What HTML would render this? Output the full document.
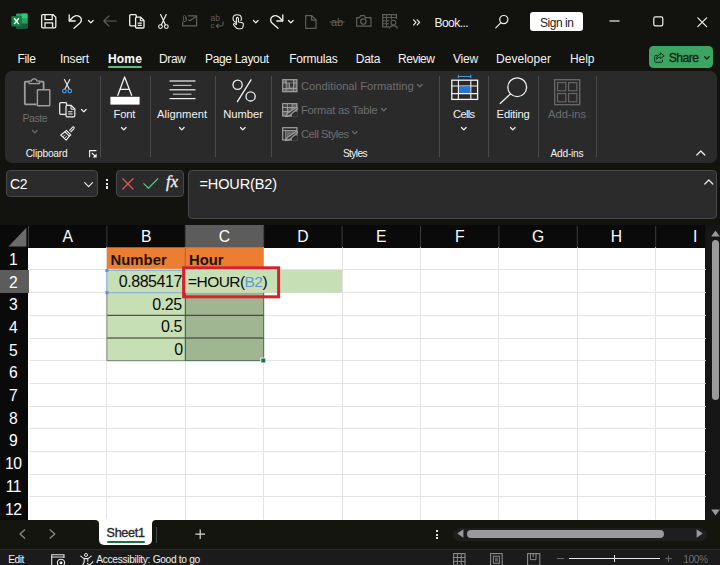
<!DOCTYPE html>
<html>
<head>
<meta charset="utf-8">
<title>Book1 - Excel</title>
<style>
html,body{margin:0;padding:0;}
body{width:720px;height:565px;overflow:hidden;background:#12120e;font-family:"Liberation Sans",sans-serif;position:relative;color:#fff;}
.abs{position:absolute;}
.t{position:absolute;white-space:nowrap;line-height:1;}
svg{position:absolute;overflow:visible;}
/* ribbon */
#ribbon{left:5px;top:70.5px;width:712px;height:92px;background:#2a2a2a;border-radius:7px;}
.tab{font-size:13px;top:52px;color:#fff;}
.sep{position:absolute;width:1px;background:#4a4a4a;top:76px;height:81px;}
.rl{font-size:12px;color:#fff;}
.dis{color:#767676;}
/* formula */
#fbar{left:0;top:166px;width:720px;height:59px;background:#141414;}
#namebox{left:5.5px;top:170px;width:92px;height:27px;background:#2b2b2b;border:1px solid #484848;border-radius:4px;box-sizing:border-box;}
#fxbox{left:116px;top:170px;width:68px;height:27px;background:#2b2b2b;border:1px solid #484848;border-radius:4px;box-sizing:border-box;}
#finput{left:187.5px;top:170px;width:529.5px;height:48.5px;background:#2b2b2b;border:1px solid #484848;border-radius:4px;box-sizing:border-box;}
/* grid */
#grid{left:0;top:225px;width:705px;height:295px;background:#fff;}
#colhdr{left:0;top:225px;width:705px;height:23px;background:#0a0a0a;}
#rowhdr{left:0;top:248px;width:28px;height:272px;background:#0a0a0a;}
.ch{font-size:15px;color:#fff;top:229px;text-align:center;}
.rh{font-size:15px;color:#fff;left:0;width:28px;text-align:center;}
.vl{position:absolute;width:1px;top:248px;height:272px;background:#e1e1e1;}
.hl{position:absolute;height:1px;left:29px;width:676px;background:#e1e1e1;}
.hvl{position:absolute;width:1px;top:226px;height:22px;background:#3c3c3c;}
.cell{font-size:15px;color:#000;}
</style>
</head>
<body>

<!-- ===== TITLE BAR ===== -->
<div id="titlebar">
<svg style="left:11px;top:13px" width="17" height="16" viewBox="0 0 17 16" fill="none">
<rect x="5" y="0.5" width="11.5" height="15" rx="1.2" fill="#21a366"/>
<rect x="10.7" y="0.5" width="5.8" height="5" fill="#33c481"/>
<rect x="5" y="5.5" width="5.7" height="5" fill="#107c41"/>
<rect x="10.7" y="5.5" width="5.8" height="5" fill="#21a366"/>
<rect x="5" y="10.5" width="11.5" height="5" fill="#185c37"/>
<rect x="0.3" y="3" width="10.4" height="10.4" rx="1" fill="#107c41"/>
<path d="M3.2 5.3 L7.8 11.1 M7.8 5.3 L3.2 11.1" stroke="#fff" stroke-width="1.5"/></svg>
<svg style="left:41px;top:14px" width="16" height="15" viewBox="0 0 16 15" fill="none">
<path d="M1.8 0.7 H12.2 L14.8 3.3 V12.5 Q14.8 13.8 13.5 13.8 H1.8 Q0.7 13.8 0.7 12.7 V1.8 Q0.7 0.7 1.8 0.7 Z" stroke="#f0f0f0" stroke-width="1.3"/>
<path d="M4 0.9 V5.6 H11.2 V0.9" stroke="#f0f0f0" stroke-width="1.3"/>
<path d="M4 13.6 V8.8 H11.6 V13.6" stroke="#f0f0f0" stroke-width="1.3"/></svg>
<svg style="left:68px;top:14px" width="15" height="15" viewBox="0 0 15 15" fill="none">
<path d="M1.2 1 V7 H7.2" stroke="#f0f0f0" stroke-width="1.3" stroke-linecap="round" stroke-linejoin="round"/>
<path d="M1.5 6.8 L4.8 3.3 Q8.2 0.2 11.6 2.6 Q15 5.6 12 9 L6 14.2" stroke="#f0f0f0" stroke-width="1.3" stroke-linecap="round" stroke-linejoin="round"/></svg>
<svg style="left:87.7px;top:19.6px" width="5.6" height="3.4" viewBox="0 0 5.6 3.4" fill="none"><path d="M0.5 0.5 L2.8 2.9 L5.1 0.5" stroke="#f0f0f0" stroke-width="1.25" stroke-linecap="round" stroke-linejoin="round"/></svg>
<svg style="left:103px;top:15px" width="14" height="12" viewBox="0 0 14 12" fill="none"><path d="M13.5 6 H0.8 M6 0.8 L0.8 6 L6 11.2" stroke="#5f5f5f" stroke-width="1.2" stroke-linecap="round" stroke-linejoin="round"/></svg>
<svg style="left:128.5px;top:14px" width="16" height="15" viewBox="0 0 16 15" fill="none">
<path d="M6.5 11.8 H1.8 Q0.7 11.8 0.7 10.7 V1.8 Q0.7 0.7 1.8 0.7 H6.2 Q7.3 0.7 7.3 1.8 V3" stroke="#f0f0f0" stroke-width="1.3"/>
<path d="M7.6 3.2 H11.6 L15 6.6 V13 Q15 14 14 14 H7.6 Q6.6 14 6.6 13 V4.2 Q6.6 3.2 7.6 3.2 Z" stroke="#f0f0f0" stroke-width="1.3"/>
<path d="M11.4 3.4 V6.8 H14.8" stroke="#f0f0f0" stroke-width="1.1"/>
<path d="M8.8 9.2 H12.8 M8.8 11.4 H12.8" stroke="#f0f0f0" stroke-width="1.2"/></svg>
<svg style="left:158px;top:13.5px" width="11" height="16" viewBox="0 0 11 16" fill="none">
<path d="M2.6 0.6 L7.4 10.8 M8.2 0.6 L3.4 10.8" stroke="#f0f0f0" stroke-width="1.2" stroke-linecap="round"/>
<circle cx="2.5" cy="12.6" r="1.9" stroke="#f0f0f0" stroke-width="1.1"/>
<circle cx="8.3" cy="12.6" r="1.9" stroke="#f0f0f0" stroke-width="1.1"/></svg>
<svg style="left:182px;top:15px" width="16" height="12" viewBox="0 0 16 12" fill="none">
<path d="M6 0.9 H14.6 V10.8 H0.7 V6.5" stroke="#5f5f5f" stroke-width="1.2"/>
<path d="M14.4 1.2 L8 5.8 L6 4.6" stroke="#5f5f5f" stroke-width="1.1"/>
<path d="M4.4 2.2 V5 Q4.4 6.6 3 6.6 Q1.4 6.6 1.4 5 V1.8 Q1.4 0.5 2.6 0.5 Q3.6 0.5 3.6 1.8 V4.6" stroke="#5f5f5f" stroke-width="0.9"/></svg>
<svg style="left:210px;top:14px" width="15" height="16" viewBox="0 0 15 16" fill="none"><text x="0.6" y="7" font-family="Liberation Sans, sans-serif" font-size="8.5" fill="#5f5f5f">ab</text><text x="0.6" y="14" font-family="Liberation Sans, sans-serif" font-size="8" fill="#5f5f5f">c</text><path d="M13 7.5 V10.2 Q13 12 11 12 H6.5 M8.6 9.8 L6.3 12 L8.6 14.2" stroke="#5f5f5f" stroke-width="1.1"/></svg>
<svg style="left:232px;top:13.5px" width="13" height="16" viewBox="0 0 13 16" fill="none">
<path d="M4.6 8.6 Q1 7.6 1 4.6 Q1 0.8 5.2 0.8 Q9.4 0.8 9.4 4.6 Q9.4 5.6 9 6.4" stroke="#f0f0f0" stroke-width="1.1" stroke-linecap="round"/>
<path d="M4.4 11 V4.6 Q4.4 3.4 5.4 3.4 Q6.4 3.4 6.4 4.6 V8 L10.4 8.8 Q11.6 9.2 11.4 10.6 L10.8 13.4 Q10.4 14.8 9 14.8 H6.4 Q5 14.8 4 13.6 L1.6 10.8 Q1.2 9.8 2.2 9.6 Q3 9.4 4.4 11" stroke="#f0f0f0" stroke-width="1.1" stroke-linejoin="round"/></svg>
<svg style="left:252.7px;top:19.6px" width="5.6" height="3.4" viewBox="0 0 5.6 3.4" fill="none"><path d="M0.5 0.5 L2.8 2.9 L5.1 0.5" stroke="#f0f0f0" stroke-width="1.25" stroke-linecap="round" stroke-linejoin="round"/></svg>
<svg style="left:268.5px;top:14px" width="15" height="15" viewBox="0 0 15 15" fill="none">
<path d="M13.8 1 V7 H7.8" stroke="#f0f0f0" stroke-width="1.3" stroke-linecap="round" stroke-linejoin="round"/>
<path d="M13.5 6.8 L10.2 3.3 Q6.8 0.2 3.4 2.6 Q0 5.6 3 9 L9 14.2" stroke="#f0f0f0" stroke-width="1.3" stroke-linecap="round" stroke-linejoin="round"/></svg>
<svg style="left:288.2px;top:19.6px" width="5.6" height="3.4" viewBox="0 0 5.6 3.4" fill="none"><path d="M0.5 0.5 L2.8 2.9 L5.1 0.5" stroke="#f0f0f0" stroke-width="1.25" stroke-linecap="round" stroke-linejoin="round"/></svg>
<svg style="left:305px;top:14.5px" width="12" height="14" viewBox="0 0 12 14" fill="none"><path d="M0.7 0.7 H6.8 L11 5 V13.3 H0.7 Z M6.6 0.9 V5.2 H10.8" stroke="#5f5f5f" stroke-width="1.2" stroke-linejoin="round"/></svg>
<svg style="left:329px;top:14px" width="16" height="14" viewBox="0 0 16 14" fill="none"><text x="2" y="11.5" font-family="Liberation Sans, sans-serif" font-size="11" fill="#5f5f5f">ab</text><path d="M0.5 8 H15.5" stroke="#5f5f5f" stroke-width="1"/></svg>
<svg style="left:355.5px;top:15px" width="16" height="12" viewBox="0 0 16 12" fill="none">
<path d="M0.7 2.6 H3.6 L4.6 0.7 H8.4 L9.4 2.6 H15 V11.2 H0.7 Z" stroke="#5f5f5f" stroke-width="1.2" stroke-linejoin="round"/>
<circle cx="7.4" cy="6.6" r="2.7" stroke="#5f5f5f" stroke-width="1.2"/></svg>
<svg style="left:382px;top:14px" width="16" height="15" viewBox="0 0 16 15" fill="none">
<path d="M7 12.8 H0.7 V0.7 H14.4 V5" stroke="#5f5f5f" stroke-width="1.2"/>
<path d="M0.7 3.6 H14.4 M4.6 0.7 V12.8 M9.4 0.7 V5.6 M0.7 6.8 H7.6 M0.7 9.8 H7" stroke="#5f5f5f" stroke-width="1"/>
<circle cx="11.4" cy="8.6" r="2.4" stroke="#5f5f5f" stroke-width="1.1"/>
<path d="M7.4 14.6 Q7.8 11.6 11.4 11.6 Q15 11.6 15.4 14.6" stroke="#5f5f5f" stroke-width="1.1"/></svg>
<svg style="left:412.5px;top:18.5px" width="8" height="7" viewBox="0 0 8 7" fill="none"><path d="M0.6 0.8 L3 3.3 L0.6 5.8 M4.2 0.8 L6.6 3.3 L4.2 5.8" stroke="#f0f0f0" stroke-width="1.2" stroke-linecap="round" stroke-linejoin="round"/></svg>
<div class="t" style="left:434.5px;top:16.5px;font-size:12px;color:#f2f2f2;letter-spacing:-0.55px;">Book...</div>
<svg style="left:495px;top:14px" width="15" height="15" viewBox="0 0 15 15" fill="none"><circle cx="8.8" cy="5.6" r="4.1" stroke="#f0f0f0" stroke-width="1.2"/><path d="M5.9 8.6 L0.8 13.8" stroke="#f0f0f0" stroke-width="1.2" stroke-linecap="round"/></svg>
<div class="abs" style="left:530px;top:12px;width:53px;height:19px;background:#fff;border-radius:3px"></div>
<div class="t" style="left:540.0px;top:16.5px;font-size:12px;color:#222;letter-spacing:-0.46px;">Sign in</div>
<svg style="left:608.5px;top:19.7px" width="12" height="2" viewBox="0 0 12 2" fill="none"><path d="M0.5 1 H10.5" stroke="#f0f0f0" stroke-width="1.2"/></svg>
<svg style="left:652.7px;top:16px" width="11" height="11" viewBox="0 0 11 11" fill="none"><rect x="0.8" y="0.8" width="9" height="9" rx="1.6" stroke="#f0f0f0" stroke-width="1.2"/></svg>
<svg style="left:697.3px;top:16.8px" width="11" height="11" viewBox="0 0 11 11" fill="none"><path d="M0.8 0.8 L9.6 9.6 M9.6 0.8 L0.8 9.6" stroke="#f0f0f0" stroke-width="1.2" stroke-linecap="round"/></svg>
</div>

<!-- ===== TABS ===== -->
<div id="tabs">
<div class="t" style="left:17.5px;top:53.0px;font-size:12px;color:#f4f4f4;letter-spacing:-0.34px;">File</div>
<div class="t" style="left:60.0px;top:53.0px;font-size:12px;color:#f4f4f4;letter-spacing:-0.21px;">Insert</div>
<div class="t" style="left:159.0px;top:53.0px;font-size:12px;color:#f4f4f4;letter-spacing:-0.38px;">Draw</div>
<div class="t" style="left:205.0px;top:53.0px;font-size:12px;color:#f4f4f4;letter-spacing:-0.33px;">Page Layout</div>
<div class="t" style="left:289.2px;top:53.0px;font-size:12px;color:#f4f4f4;letter-spacing:-0.22px;">Formulas</div>
<div class="t" style="left:355.8px;top:53.0px;font-size:12px;color:#f4f4f4;letter-spacing:-0.28px;">Data</div>
<div class="t" style="left:398.0px;top:53.0px;font-size:12px;color:#f4f4f4;letter-spacing:-0.48px;">Review</div>
<div class="t" style="left:453.0px;top:53.0px;font-size:12px;color:#f4f4f4;letter-spacing:-0.20px;">View</div>
<div class="t" style="left:496.0px;top:53.0px;font-size:12px;color:#f4f4f4;letter-spacing:0.03px;">Developer</div>
<div class="t" style="left:570.0px;top:53.0px;font-size:12px;color:#f4f4f4;letter-spacing:-0.05px;">Help</div>
<div class="t" style="left:108.0px;top:53.0px;font-size:12px;color:#fff;letter-spacing:0.16px;font-weight:bold;">Home</div>
<div class="abs" style="left:108px;top:66px;width:34px;height:2px;background:#5fb87c;border-radius:1px"></div>
<div class="abs" style="left:649px;top:46px;width:64px;height:22px;background:#3ca561;border-radius:4.5px"></div>
<svg style="left:653.5px;top:51.5px" width="11" height="11" viewBox="0 0 11 11" fill="none"><path d="M3.6 3.4 H1.6 Q0.7 3.4 0.7 4.3 V9.4 Q0.7 10.3 1.6 10.3 H7.6 Q8.5 10.3 8.5 9.4 V7.6" stroke="#123020" stroke-width="1"/><path d="M6.4 0.8 L10.2 3.8 L6.4 6.6 V5 Q3.6 5 2.6 7.4 Q2.8 2.8 6.4 2.6 Z" stroke="#123020" stroke-width="1" stroke-linejoin="round"/></svg>
<div class="t" style="left:668.8px;top:52.0px;font-size:12.2px;color:#0c2616;letter-spacing:-0.59px;-webkit-text-stroke:0.3px #0c2616;">Share</div>
<svg style="left:703.9px;top:55.6px" width="6" height="4" viewBox="0 0 6 4" fill="none"><path d="M0.7 0.7 L2.9 2.9 L5.1 0.7" stroke="#0f2a1b" stroke-width="1.4" stroke-linecap="round" stroke-linejoin="round"/></svg>
</div>

<!-- ===== RIBBON ===== -->
<div class="abs" id="ribbon"></div>
<div id="ribboncontent">
<div class="sep" style="left:100px"></div>
<div class="sep" style="left:150px"></div>
<div class="sep" style="left:215px"></div>
<div class="sep" style="left:271px"></div>
<div class="sep" style="left:439px"></div>
<div class="sep" style="left:488px"></div>
<div class="sep" style="left:538px"></div>
<div class="sep" style="left:596px"></div>
<svg style="left:24px;top:78px" width="27" height="29" viewBox="0 0 27 29" fill="none">
<path d="M5 3.6 H1.6 Q0.8 3.6 0.8 4.4 V25.6 Q0.8 26.4 1.6 26.4 H12.6" stroke="#9e9e9e" stroke-width="1.8"/>
<path d="M15.4 3.6 H18.8 Q19.6 3.6 19.6 4.4 V11" stroke="#9e9e9e" stroke-width="1.8"/>
<path d="M5 5.6 V3.2 H7.4 Q7.6 0.8 10.2 0.8 Q12.8 0.8 13 3.2 H15.4 V5.6 Z" stroke="#9e9e9e" stroke-width="1.3" stroke-linejoin="round"/>
<rect x="13.4" y="11.8" width="12.4" height="16" rx="0.6" fill="#2a2a2a" stroke="#9e9e9e" stroke-width="1.4"/></svg>
<div class="t" style="left:22.5px;top:112.7px;font-size:10.6px;color:#6e6e6e;letter-spacing:-0.46px;">Paste</div>
<svg style="left:31.6px;top:130px" width="5.6" height="3.4" viewBox="0 0 5.6 3.4" fill="none"><path d="M0.5 0.5 L2.8 2.9 L5.1 0.5" stroke="#6e6e6e" stroke-width="1.25" stroke-linecap="round" stroke-linejoin="round"/></svg>
<svg style="left:61.5px;top:78.5px" width="11" height="15" viewBox="0 0 11 15" fill="none">
<path d="M2.4 0.6 L7.2 10 M7.8 0.6 L3 10" stroke="#f2f2f2" stroke-width="1.1" stroke-linecap="round"/>
<circle cx="2.4" cy="12" r="1.8" stroke="#3f9be6" stroke-width="1.2"/>
<circle cx="7.8" cy="12" r="1.8" stroke="#3f9be6" stroke-width="1.2"/></svg>
<svg style="left:58.5px;top:101.5px" width="17" height="16" viewBox="0 0 17 16" fill="none">
<path d="M6.8 12.4 H1.8 Q0.7 12.4 0.7 11.3 V1.8 Q0.7 0.7 1.8 0.7 H6.6 Q7.7 0.7 7.7 1.8 V3.2" stroke="#f2f2f2" stroke-width="1.2"/>
<path d="M8 3.4 H12.2 L15.8 7 V13.8 Q15.8 14.8 14.8 14.8 H8 Q7 14.8 7 13.8 V4.4 Q7 3.4 8 3.4 Z" stroke="#f2f2f2" stroke-width="1.2"/>
<path d="M12 3.6 V7.2 H15.6" stroke="#f2f2f2" stroke-width="1"/>
<path d="M9.2 9.8 H13.6 M9.2 12 H13.6" stroke="#f2f2f2" stroke-width="1.1"/></svg>
<svg style="left:81.0px;top:108.6px" width="5.6" height="3.4" viewBox="0 0 5.6 3.4" fill="none"><path d="M0.5 0.5 L2.8 2.9 L5.1 0.5" stroke="#f2f2f2" stroke-width="1.25" stroke-linecap="round" stroke-linejoin="round"/></svg>
<svg style="left:60px;top:126px" width="15" height="15" viewBox="0 0 15 15" fill="none">
<path d="M9.4 4.6 L12.6 1.2 Q13.4 0.5 14 1.2 Q14.6 2 13.8 2.8 L10.6 6" stroke="#f2f2f2" stroke-width="1.1" stroke-linejoin="round"/>
<path d="M6.4 4.4 L10.8 8.8 L9.4 10.2 L5 5.8 Z" stroke="#f2f2f2" stroke-width="1.1" stroke-linejoin="round"/>
<path d="M5 5.8 L0.8 9 L6.2 14.2 L9.4 10.2" stroke="#f2f2f2" stroke-width="1.1" stroke-linejoin="round"/>
<path d="M3 10.8 L5 8.6 M4.6 12.4 L6.8 10" stroke="#f2f2f2" stroke-width="0.8"/></svg>
<div class="t" style="left:25.7px;top:149.1px;font-size:10.2px;color:#f2f2f2;letter-spacing:-0.20px;">Clipboard</div>
<svg style="left:88.6px;top:149.6px" width="8" height="8" viewBox="0 0 8 8" fill="none"><path d="M0.6 7.2 V0.6 H7.4" stroke="#f2f2f2" stroke-width="1.1"/><path d="M2.8 2.8 L6 6" stroke="#f2f2f2" stroke-width="1.1"/><path d="M7.6 3.6 V7.6 H3.6 Z" fill="#f2f2f2"/></svg>
<svg style="left:109.5px;top:76px" width="30" height="29" viewBox="0 0 30 29" fill="none">
<path d="M7.6 19.8 L14.6 1 L21.8 19.8 M10.2 13.4 H19.2" stroke="#f2f2f2" stroke-width="1.3" stroke-linejoin="round"/>
<rect x="0.4" y="20.8" width="29.2" height="7.8" fill="#ffffff"/></svg>
<div class="t" style="left:113.5px;top:109.4px;font-size:11.2px;color:#f2f2f2;letter-spacing:-0.15px;">Font</div>
<svg style="left:121.4px;top:127px" width="5.6" height="3.4" viewBox="0 0 5.6 3.4" fill="none"><path d="M0.5 0.5 L2.8 2.9 L5.1 0.5" stroke="#f2f2f2" stroke-width="1.25" stroke-linecap="round" stroke-linejoin="round"/></svg>
<svg style="left:168.5px;top:79.5px" width="27" height="20" viewBox="0 0 27 20" fill="none"><path d="M0.5 1.0 H26.5" stroke="#f2f2f2" stroke-width="1.2"/><path d="M4 5.4 H22.5" stroke="#bdbdbd" stroke-width="1.2"/><path d="M0.5 9.8 H26.5" stroke="#f2f2f2" stroke-width="1.2"/><path d="M4 14.200000000000001 H22.5" stroke="#bdbdbd" stroke-width="1.2"/><path d="M0.5 18.6 H26.5" stroke="#f2f2f2" stroke-width="1.2"/></svg>
<div class="t" style="left:157.0px;top:109.4px;font-size:11.2px;color:#f2f2f2;letter-spacing:0.03px;">Alignment</div>
<svg style="left:178.5px;top:127px" width="5.6" height="3.4" viewBox="0 0 5.6 3.4" fill="none"><path d="M0.5 0.5 L2.8 2.9 L5.1 0.5" stroke="#f2f2f2" stroke-width="1.25" stroke-linecap="round" stroke-linejoin="round"/></svg>
<svg style="left:231.5px;top:78.5px" width="25" height="24" viewBox="0 0 25 24" fill="none">
<circle cx="5.6" cy="5.8" r="4.6" stroke="#f2f2f2" stroke-width="1.3"/>
<circle cx="18.6" cy="17.4" r="4.6" stroke="#f2f2f2" stroke-width="1.3"/>
<path d="M19 0.8 L5.4 22.6" stroke="#f2f2f2" stroke-width="1.3" stroke-linecap="round"/></svg>
<div class="t" style="left:223.3px;top:109.4px;font-size:11.2px;color:#f2f2f2;letter-spacing:-0.02px;">Number</div>
<svg style="left:239.8px;top:127px" width="5.6" height="3.4" viewBox="0 0 5.6 3.4" fill="none"><path d="M0.5 0.5 L2.8 2.9 L5.1 0.5" stroke="#f2f2f2" stroke-width="1.25" stroke-linecap="round" stroke-linejoin="round"/></svg>
<svg style="left:282px;top:79px" width="16" height="14" viewBox="0 0 16 14" fill="none">
<rect x="0.7" y="0.7" width="14.2" height="12" fill="#5e5e5e" stroke="#a2a2a2" stroke-width="1.2"/>
<path d="M0.7 3.9 H14.9 M0.7 9.6 H14.9 M4 0.7 V12.7 M11.4 0.7 V12.7" stroke="#a2a2a2" stroke-width="1"/>
<rect x="5" y="1.6" width="6" height="2" fill="#3a3a3a"/>
<rect x="7.6" y="4.4" width="3.4" height="3" fill="#2e2e2e"/>
<rect x="1.4" y="4.6" width="2.2" height="4.6" fill="#3a3a3a"/>
<path d="M7.4 3.9 V9.6" stroke="#a2a2a2" stroke-width="0.9"/></svg>
<svg style="left:282px;top:103px" width="16" height="14" viewBox="0 0 16 14" fill="none">
<rect x="0.7" y="0.7" width="14.2" height="12.2" fill="#5e5e5e" stroke="#a2a2a2" stroke-width="1.2"/>
<path d="M0.7 4.4 H14.9 M0.7 8.6 H14.9 M5.2 0.7 V12.9 M10 0.7 V12.9" stroke="#a2a2a2" stroke-width="1"/>
<rect x="1.4" y="1.4" width="3.2" height="2.4" fill="#3a3a3a"/><rect x="5.8" y="1.4" width="3.6" height="2.4" fill="#3a3a3a"/><rect x="1.4" y="5" width="3.2" height="3" fill="#3a3a3a"/>
<rect x="10" y="8.6" width="5.6" height="5" fill="#292929"/>
<path d="M14.6 4.2 L15.6 5.4 L7.6 12.6 L3.6 13.6 L5.4 10.4 Z" fill="#3c3c3c" stroke="#a2a2a2" stroke-width="1.1" stroke-linejoin="round"/><path d="M3.2 13.2 H6.4" stroke="#a2a2a2" stroke-width="1"/></svg>
<svg style="left:282px;top:127px" width="16" height="14" viewBox="0 0 16 14" fill="none">
<rect x="0.7" y="0.7" width="14.2" height="12.2" fill="#2e2e2e" stroke="#a2a2a2" stroke-width="1.2"/>
<path d="M0.7 3.6 H14.9 M3.8 3.6 V12.9" stroke="#a2a2a2" stroke-width="1"/>
<rect x="4.4" y="4.2" width="9.8" height="8" fill="#6a6a6a"/>
<rect x="10" y="8.6" width="5.6" height="5" fill="#292929"/>
<path d="M14.6 4.2 L15.6 5.4 L7.6 12.6 L3.6 13.6 L5.4 10.4 Z" fill="#3c3c3c" stroke="#a2a2a2" stroke-width="1.1" stroke-linejoin="round"/><path d="M3.2 13.2 H6.4" stroke="#a2a2a2" stroke-width="1"/></svg>
<div class="t" style="left:301.0px;top:81.0px;font-size:11.2px;color:#6e6e6e;letter-spacing:0.01px;">Conditional Formatting</div>
<svg style="left:417.2px;top:83.6px" width="5.6" height="3.4" viewBox="0 0 5.6 3.4" fill="none"><path d="M0.5 0.5 L2.8 2.9 L5.1 0.5" stroke="#6e6e6e" stroke-width="1.25" stroke-linecap="round" stroke-linejoin="round"/></svg>
<div class="t" style="left:301.0px;top:104.9px;font-size:11.2px;color:#6e6e6e;letter-spacing:-0.23px;">Format as Table</div>
<svg style="left:381.0px;top:107.5px" width="5.6" height="3.4" viewBox="0 0 5.6 3.4" fill="none"><path d="M0.5 0.5 L2.8 2.9 L5.1 0.5" stroke="#6e6e6e" stroke-width="1.25" stroke-linecap="round" stroke-linejoin="round"/></svg>
<div class="t" style="left:301.0px;top:128.8px;font-size:11.2px;color:#6e6e6e;letter-spacing:-0.47px;">Cell Styles</div>
<svg style="left:352.2px;top:131.4px" width="5.6" height="3.4" viewBox="0 0 5.6 3.4" fill="none"><path d="M0.5 0.5 L2.8 2.9 L5.1 0.5" stroke="#6e6e6e" stroke-width="1.25" stroke-linecap="round" stroke-linejoin="round"/></svg>
<div class="t" style="left:342.9px;top:149.1px;font-size:10.2px;color:#f2f2f2;letter-spacing:-0.62px;">Styles</div>
<svg style="left:450.5px;top:74px" width="28" height="27" viewBox="0 0 28 27" fill="none">
<path d="M7.4 2.5 H19.8 M7.4 0.8 V4.2 M19.8 0.8 V4.2" stroke="#3f9be6" stroke-width="1.1"/>
<rect x="0.8" y="6.2" width="25.8" height="19.2" stroke="#f2f2f2" stroke-width="1.3"/>
<path d="M7.4 6.2 V25.4 M19.8 6.2 V25.4 M0.8 12 H26.6 M0.8 19.6 H26.6" stroke="#f2f2f2" stroke-width="1.1"/>
<rect x="8" y="12.6" width="11.2" height="6.4" fill="#1f78d8"/></svg>
<div class="t" style="left:453.0px;top:109.4px;font-size:11.2px;color:#f2f2f2;letter-spacing:-0.70px;">Cells</div>
<svg style="left:460.8px;top:127px" width="5.6" height="3.4" viewBox="0 0 5.6 3.4" fill="none"><path d="M0.5 0.5 L2.8 2.9 L5.1 0.5" stroke="#f2f2f2" stroke-width="1.25" stroke-linecap="round" stroke-linejoin="round"/></svg>
<svg style="left:499px;top:76px" width="30" height="29" viewBox="0 0 30 29" fill="none"><circle cx="18.2" cy="11.2" r="9.4" stroke="#f2f2f2" stroke-width="1.3"/><path d="M11.4 18 L1.2 27.4" stroke="#f2f2f2" stroke-width="1.3" stroke-linecap="round"/></svg>
<div class="t" style="left:496.6px;top:109.4px;font-size:11.2px;color:#f2f2f2;letter-spacing:-0.17px;">Editing</div>
<svg style="left:510.4px;top:127px" width="5.6" height="3.4" viewBox="0 0 5.6 3.4" fill="none"><path d="M0.5 0.5 L2.8 2.9 L5.1 0.5" stroke="#f2f2f2" stroke-width="1.25" stroke-linecap="round" stroke-linejoin="round"/></svg>
<svg style="left:554px;top:78.5px" width="27" height="27" viewBox="0 0 27 27" fill="none">
<rect x="0.7" y="0.7" width="25" height="25" stroke="#6a6a6a" stroke-width="1.3"/>
<rect x="3.6" y="3.6" width="8.2" height="8.2" stroke="#6a6a6a" stroke-width="1.1"/>
<rect x="14.6" y="3.6" width="8.2" height="8.2" stroke="#6a6a6a" stroke-width="1.1"/>
<rect x="3.6" y="14.6" width="8.2" height="8.2" stroke="#6a6a6a" stroke-width="1.1"/>
<rect x="14.6" y="14.6" width="8.2" height="8.2" stroke="#6a6a6a" stroke-width="1.1"/></svg>
<div class="t" style="left:548.0px;top:109.4px;font-size:11.2px;color:#6e6e6e;letter-spacing:0.01px;">Add-ins</div>
<div class="t" style="left:550.5px;top:149.1px;font-size:10.2px;color:#f2f2f2;letter-spacing:-0.25px;">Add-ins</div>
<svg style="left:696.4px;top:150.3px" width="10" height="6" viewBox="0 0 10 6" fill="none"><path d="M0.8 5 L4.8 1 L8.8 5" stroke="#f2f2f2" stroke-width="1.2" stroke-linecap="round" stroke-linejoin="round"/></svg>
</div>

<!-- ===== FORMULA BAR ===== -->
<div class="abs" id="namebox"></div>
<div class="abs" id="fxbox"></div>
<div class="abs" id="finput"></div>
<div id="fcontent">
<div class="t" style="left:10.0px;top:177.0px;font-size:14px;color:#fff;letter-spacing:-0.45px;">C2</div>
<svg style="left:83.5px;top:181.5px" width="10" height="6" viewBox="0 0 10 6" fill="none"><path d="M0.7 0.7 L4.6 4.7 L8.5 0.7" stroke="#e8e8e8" stroke-width="1.2" stroke-linecap="round" stroke-linejoin="round"/></svg>
<div class="abs" style="left:106.3px;top:179.2px;width:2.2px;height:2.2px;background:#e6e6e6"></div>
<div class="abs" style="left:106.3px;top:182.8px;width:2.2px;height:2.2px;background:#e6e6e6"></div>
<div class="abs" style="left:106.3px;top:186.4px;width:2.2px;height:2.2px;background:#e6e6e6"></div>
<svg style="left:122px;top:177.5px" width="12" height="12" viewBox="0 0 12 12" fill="none"><path d="M0.8 0.8 L11 11 M11 0.8 L0.8 11" stroke="#d9575c" stroke-width="1.3" stroke-linecap="round"/></svg>
<svg style="left:142.5px;top:177.5px" width="16" height="11" viewBox="0 0 16 11" fill="none"><path d="M0.8 5.6 L5.4 10.2 L14.8 0.8" stroke="#52c083" stroke-width="1.3" stroke-linecap="round" stroke-linejoin="round"/></svg>
<div class="t" style="left:166px;top:174.3px;font-family:'Liberation Serif',serif;font-style:italic;font-size:16.5px;-webkit-text-stroke:0.35px #f0f0f0;color:#f0f0f0;letter-spacing:0.2px">fx</div>
<div class="t" style="left:199.5px;top:177.4px;font-size:14.5px;color:#fff;letter-spacing:-0.12px;">=HOUR(B2)</div>
<svg style="left:703.6px;top:178.5px" width="10" height="6" viewBox="0 0 10 6" fill="none"><path d="M0.8 5 L4.8 1 L8.8 5" stroke="#e8e8e8" stroke-width="1.2" stroke-linecap="round" stroke-linejoin="round"/></svg>
</div>

<!-- ===== GRID ===== -->
<div class="abs" id="grid"></div>
<div class="abs" id="colhdr"></div>
<div class="abs" id="rowhdr"></div>
<div id="gridcontent">
<div class="abs" style="left:185px;top:225px;width:79px;height:22.5px;background:#5c5c5c;"></div>
<div class="abs" style="left:0px;top:270px;width:28.5px;height:23px;background:#5c5c5c;"></div>
<svg style="left:0;top:0" width="720" height="565" viewBox="0 0 720 565" fill="none"><path d="M28.50 226V247.3M106.90 226V247.3M185.30 226V247.3M263.70 226V247.3M342.10 226V247.3M420.50 226V247.3M498.90 226V247.3M577.30 226V247.3M655.70 226V247.3" stroke="#3c3c3c" stroke-width="1"/><path d="M26.4 227.8 V246.4 H8.4 Z" fill="#6b6b6b"/><path d="M106.5 247.3V519.6M185.5 247.3V519.6M263.5 247.3V519.6M342.5 247.3V519.6M420.5 247.3V519.6M498.5 247.3V519.6M577.5 247.3V519.6M655.5 247.3V519.6M29 269.5H705.8M29 292.5H705.8M29 315.5H705.8M29 338.5H705.8M29 360.5H705.8M29 383.5H705.8M29 406.5H705.8M29 428.5H705.8M29 451.5H705.8M29 474.5H705.8M29 496.5H705.8" stroke="#e3e3e3" stroke-width="1"/><rect x="106.9" y="247.3" width="156.8" height="21.6" fill="#ed7d31"/><rect x="106.9" y="270" width="235.2" height="22.7" fill="#c6dfb4"/><rect x="106.9" y="292.7" width="78.4" height="68" fill="#c6dfb4"/><rect x="185.3" y="292.7" width="78.4" height="68" fill="#a0b592"/><path d="M185.3 248V269" stroke="#a45a28" stroke-width="0.8"/><path d="M106.9 315.3H263.7M106.9 338H263.7" stroke="#2a3326" stroke-width="1"/><path d="M106.9 360.7H185.3" stroke="#6f7f68" stroke-width="1"/><path d="M106.9 292.7V360.7" stroke="#7f8f77" stroke-width="1"/><path d="M185.3 292.7V360.7" stroke="#2f5a3c" stroke-width="1"/><path d="M263.7 292.7V360.7M185.3 360.7H263.7" stroke="#3d6e4f" stroke-width="1"/><rect x="260.4" y="357.6" width="5.8" height="5.8" fill="#fff"/><rect x="261.3" y="358.5" width="4" height="4" fill="#1f6e43"/><rect x="106.9" y="270.3" width="78.2" height="22.4" stroke="#7aa8e0" stroke-width="1"/><rect x="105.4" y="269" width="3" height="3" fill="#5b90da"/><rect x="105.4" y="291.2" width="3" height="3" fill="#5b90da"/></svg>
<div class="t" style="left:62.5px;top:228.7px;font-size:15.7px;color:#fff;">A</div>
<div class="t" style="left:140.9px;top:228.7px;font-size:15.7px;color:#fff;">B</div>
<div class="t" style="left:218.8px;top:228.7px;font-size:15.7px;color:#fff;">C</div>
<div class="t" style="left:297.2px;top:228.7px;font-size:15.7px;color:#fff;">D</div>
<div class="t" style="left:376.1px;top:228.7px;font-size:15.7px;color:#fff;">E</div>
<div class="t" style="left:454.9px;top:228.7px;font-size:15.7px;color:#fff;">F</div>
<div class="t" style="left:532.0px;top:228.7px;font-size:15.7px;color:#fff;">G</div>
<div class="t" style="left:610.8px;top:228.7px;font-size:15.7px;color:#fff;">H</div>
<div class="t" style="left:693.1px;top:228.7px;font-size:15.7px;color:#fff;">I</div>
<div class="t" style="left:9.1px;top:252.0px;font-size:15.7px;color:#fff;letter-spacing:-0.60px;">1</div>
<div class="t" style="left:9.1px;top:274.7px;font-size:15.7px;color:#fff;letter-spacing:-0.60px;">2</div>
<div class="t" style="left:9.1px;top:297.4px;font-size:15.7px;color:#fff;letter-spacing:-0.60px;">3</div>
<div class="t" style="left:9.1px;top:320.0px;font-size:15.7px;color:#fff;letter-spacing:-0.60px;">4</div>
<div class="t" style="left:9.1px;top:342.7px;font-size:15.7px;color:#fff;letter-spacing:-0.60px;">5</div>
<div class="t" style="left:9.1px;top:365.4px;font-size:15.7px;color:#fff;letter-spacing:-0.60px;">6</div>
<div class="t" style="left:9.1px;top:388.1px;font-size:15.7px;color:#fff;letter-spacing:-0.60px;">7</div>
<div class="t" style="left:9.1px;top:410.8px;font-size:15.7px;color:#fff;letter-spacing:-0.60px;">8</div>
<div class="t" style="left:9.1px;top:433.4px;font-size:15.7px;color:#fff;letter-spacing:-0.60px;">9</div>
<div class="t" style="left:5.1px;top:456.1px;font-size:15.7px;color:#fff;letter-spacing:-0.60px;">10</div>
<div class="t" style="left:5.7px;top:478.8px;font-size:15.7px;color:#fff;letter-spacing:-0.60px;">11</div>
<div class="t" style="left:5.1px;top:501.5px;font-size:15.7px;color:#fff;letter-spacing:-0.60px;">12</div>
<div class="t" style="left:110.4px;top:252.9px;font-size:14.8px;color:#1c1208;letter-spacing:0.11px;font-weight:bold;">Number</div>
<div class="t" style="left:189.0px;top:252.9px;font-size:14.8px;color:#1c1208;letter-spacing:0.02px;font-weight:bold;">Hour</div>
<div class="t" style="left:118.7px;top:274.0px;font-size:16px;color:#0a0a0a;letter-spacing:-0.43px;">0.885417</div>
<div class="t" style="left:152.3px;top:296.7px;font-size:16px;color:#0a0a0a;letter-spacing:-0.39px;">0.25</div>
<div class="t" style="left:161.0px;top:319.4px;font-size:16px;color:#0a0a0a;letter-spacing:-0.48px;">0.5</div>
<div class="t" style="left:174.2px;top:342.1px;font-size:16px;color:#0a0a0a;letter-spacing:-1.31px;">0</div>
<div class="t" style="left:188.0px;top:274.4px;font-size:15.5px;color:#0a0a0a;letter-spacing:-0.55px;">=HOUR(<span style="color:#5b9bd5">B2</span>)</div>
<svg style="left:0;top:0" width="720" height="565" viewBox="0 0 720 565" fill="none"><rect x="183.6" y="267.8" width="95" height="29" stroke="#d6222c" stroke-width="3"/></svg>
</div>

<!-- ===== SHEET TABS ===== -->
<div id="sheettabs">
<div class="abs" style="left:0px;top:519.6px;width:720px;height:29.4px;background:#14150f;"></div>
<div class="abs" style="left:706px;top:225px;width:14px;height:295px;background:#161616;"></div>
<svg style="left:710.5px;top:229.5px" width="9" height="7" viewBox="0 0 9 7" fill="none"><path d="M4.5 0.4 L8.8 6.4 H0.2 Z" fill="#9a9a9a"/></svg>
<div class="abs" style="left:711.5px;top:240px;width:7.5px;height:160px;background:#9a9a9a;border-radius:4px"></div>
<svg style="left:710.5px;top:508.5px" width="9" height="7" viewBox="0 0 9 7" fill="none"><path d="M4.5 6.6 L8.8 0.6 H0.2 Z" fill="#9a9a9a"/></svg>
<div class="abs" style="left:99.3px;top:519px;width:53px;height:26.4px;background:#ffffff;border-radius:0 0 5px 5px"></div>
<svg style="left:95.3px;top:519.6px" width="4" height="4" viewBox="0 0 4 4" fill="none"><path d="M0 0 H4 V4 Q4 0 0 0 Z" fill="#fff"/></svg>
<svg style="left:152.3px;top:519.6px" width="4" height="4" viewBox="0 0 4 4" fill="none"><path d="M4 0 H0 V4 Q0 0 4 0 Z" fill="#fff"/></svg>
<div class="t" style="left:106.6px;top:526.7px;font-size:12.6px;color:#262626;letter-spacing:-0.32px;-webkit-text-stroke:0.35px #262626;">Sheet1</div>
<div class="abs" style="left:106.6px;top:540.6px;width:38px;height:2px;background:#1e6f44;border-radius:1px"></div>
<div class="abs" style="left:155.5px;top:526.5px;width:1px;height:16px;background:#4a4a4a;"></div>
<svg style="left:18.5px;top:529px" width="7" height="10" viewBox="0 0 7 10" fill="none"><path d="M5.8 0.8 L1 5 L5.8 9.2" stroke="#8e8e8e" stroke-width="1.2" stroke-linecap="round" stroke-linejoin="round"/></svg>
<svg style="left:48.5px;top:529px" width="7" height="10" viewBox="0 0 7 10" fill="none"><path d="M1 0.8 L5.8 5 L1 9.2" stroke="#8e8e8e" stroke-width="1.2" stroke-linecap="round" stroke-linejoin="round"/></svg>
<svg style="left:195px;top:528.5px" width="11" height="11" viewBox="0 0 11 11" fill="none"><path d="M5.2 0.4 V10 M0.4 5.2 H10" stroke="#d6d6d6" stroke-width="1.2"/></svg>
<div class="abs" style="left:452.5px;top:527.5px;width:254px;height:13.4px;background:#1e1e1e;border-radius:7px"></div>
<div class="abs" style="left:467px;top:530.2px;width:196.7px;height:7.4px;background:#9a9a9a;border-radius:4px"></div>
<svg style="left:456.5px;top:529.3px" width="7" height="9" viewBox="0 0 7 9" fill="none"><path d="M0.3 4.5 L6.4 0.2 V8.8 Z" fill="#9a9a9a"/></svg>
<svg style="left:696px;top:529.3px" width="7" height="9" viewBox="0 0 7 9" fill="none"><path d="M6.7 4.5 L0.6 0.2 V8.8 Z" fill="#9a9a9a"/></svg>
<div class="abs" style="left:435.8px;top:530.2px;width:2.2px;height:2.2px;background:#e0e0e0;"></div>
<div class="abs" style="left:435.8px;top:533.5px;width:2.2px;height:2.2px;background:#e0e0e0;"></div>
<div class="abs" style="left:435.8px;top:536.8px;width:2.2px;height:2.2px;background:#e0e0e0;"></div>
</div>

<!-- ===== STATUS BAR ===== -->
<div id="status">
<div class="abs" style="left:0px;top:549px;width:720px;height:16px;background:#1b1b1b;"></div>
<div class="abs" style="left:0px;top:548.6px;width:720px;height:1px;background:#2e2e2e;"></div>
<div class="t" style="left:8.3px;top:555.1px;font-size:10.2px;color:#f0f0f0;letter-spacing:-0.49px;">Edit</div>
<svg style="left:50.5px;top:553.5px" width="15" height="12" viewBox="0 0 15 12" fill="none"><path d="M0.7 11.5 V0.7 H13 V4" stroke="#e6e6e6" stroke-width="1.1"/><path d="M0.7 3 H13" stroke="#e6e6e6" stroke-width="1"/><circle cx="10" cy="8.8" r="3.6" stroke="#e6e6e6" stroke-width="1.1"/><circle cx="10" cy="8.8" r="1.5" fill="#e6e6e6"/></svg>
<svg style="left:79.5px;top:552.5px" width="14" height="13" viewBox="0 0 14 13" fill="none"><circle cx="6" cy="2" r="1.5" stroke="#e6e6e6" stroke-width="1"/><path d="M0.8 3.2 Q3.4 5.4 4.2 5.6 V9 L2.4 12.6 M11.2 3.2 Q8.6 5.4 7.8 5.6 V8.2 M4.2 5.6 H7.8" stroke="#e6e6e6" stroke-width="1.1" stroke-linecap="round" stroke-linejoin="round"/><path d="M7.4 10.4 L9.4 12.4 L13 8.6" stroke="#e6e6e6" stroke-width="1.1" stroke-linecap="round" stroke-linejoin="round"/></svg>
<div class="t" style="left:96.3px;top:555.1px;font-size:10.2px;color:#f0f0f0;letter-spacing:-0.32px;">Accessibility: Good to go</div>
<svg style="left:453px;top:553px" width="13" height="13" viewBox="0 0 13 13" fill="none"><rect x="0.6" y="0.6" width="11.4" height="11.8" stroke="#8a8a8a" stroke-width="1.1"/><path d="M4.4 0.6 V12.4 M8.2 0.6 V12.4 M0.6 4.5 H12 M0.6 8.4 H12" stroke="#8a8a8a" stroke-width="1"/></svg>
<svg style="left:490px;top:553px" width="13" height="13" viewBox="0 0 13 13" fill="none"><rect x="0.6" y="0.6" width="11.6" height="11.8" stroke="#8a8a8a" stroke-width="1.1"/><rect x="3.4" y="3.2" width="6" height="7" stroke="#8a8a8a" stroke-width="1"/><rect x="5" y="4.6" width="2.8" height="4" fill="#8a8a8a" opacity="0.6"/></svg>
<svg style="left:526.5px;top:553px" width="14" height="13" viewBox="0 0 14 13" fill="none"><rect x="0.6" y="0.6" width="12.2" height="11.8" stroke="#8a8a8a" stroke-width="1.1"/><path d="M3.4 0.6 V6.6 H9 V0.6 M6.2 0.6 V4" stroke="#8a8a8a" stroke-width="1"/></svg>
<div class="abs" style="left:556.7px;top:558.4px;width:7px;height:1px;background:#6a6a6a;"></div>
<div class="abs" style="left:568.7px;top:558.2px;width:91px;height:1.2px;background:#e8e8e8;"></div>
<div class="abs" style="left:613.6px;top:554.6px;width:1.3px;height:7.6px;background:#e8e8e8;"></div>
<svg style="left:664.5px;top:555px" width="8" height="8" viewBox="0 0 8 8" fill="none"><path d="M3.6 0.4 V6.8 M0.4 3.6 H6.8" stroke="#6a6a6a" stroke-width="1"/></svg>
<div class="t" style="left:683.3px;top:555.1px;font-size:10.2px;color:#6e6e6e;letter-spacing:-0.42px;">100%</div>
</div>

</body>
</html>
